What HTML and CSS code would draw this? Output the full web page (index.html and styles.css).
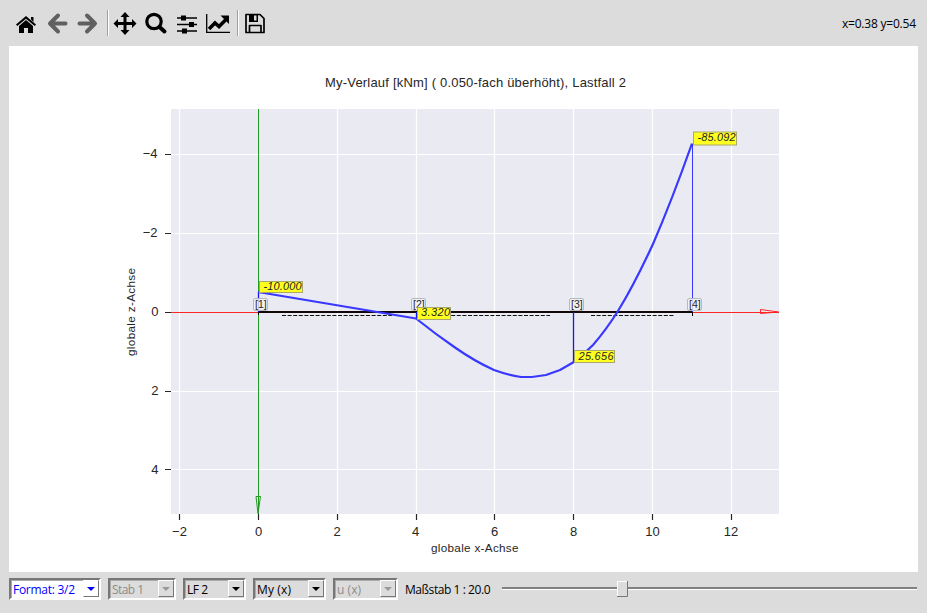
FILE: index.html
```html
<!DOCTYPE html>
<html lang="de">
<head>
<meta charset="utf-8">
<title>My-Verlauf</title>
<link rel="stylesheet" href="styles.css">
</head>
<body>
<header class="toolbar">
  <svg class="icons" width="270" height="46" viewBox="0 0 270 46">
    <path d="M16 24.500 26 16l10 8.500-1.300 1.500L26 18.700 17.300 26z"/><path d="M31 17h2.500v5l-2.500-2.500zM19 26l7-6 7 6v7h-5v-5h-4v5h-5z"/>
    <path class="arrow" d="M58 15.500 50 23.500l8 8M51 23.500h14.500M87 15.500l8 8-8 8M94 23.500H79.500"/>
    <path class="sep" d="M107.500 10v26M237.500 10v26"/><path class="sep-light" d="M108.500 10v26M238.500 10v26"/>
    <path d="m125 12 4.500 5H126.500v5h5.500V19l4.500 4.500L132 28v-3h-5.500V30h3l-4.500 5-4.500-5h3v-5h-5.500v3l-4.500-4.500L118 19v3h5.500V17h-3z"/>
    <circle class="lens" cx="154" cy="21.500" r="7.200"/><path class="handle" d="m159.500 27 5 4.500"/>
    <path class="rule" d="M177 18h20M177 24.500h20M177 31h20"/><path d="M181 15.500h5v5h-5zM189 22h5v5h-5zM182 28.500h5v5h-5z"/>
    <path class="axis" d="M206.700 14v18.300H230"/><path class="trend" d="m209 29 6-6 4 3.500 8-8"/><path d="M220.500 15.500h8.500v8.500z"/>
    <path class="disk" d="M246 14.500h14l4 4V32.500h-18zM249.500 32v-6.500h11.500V32"/><path d="M249 14h9v8h-9z"/><path class="shutter" d="M254 15.500h2.500v5h-2.500z"/>
  </svg>
  <svg class="coords" width="84" height="20"><text x="8" y="14" textLength="74">x=0.38 y=0.54</text></svg>
</header>
<main>
<svg class="plot" width="909" height="526" viewBox="9 46 909 526">
  <path class="area" d="M171 109h608v405H171z"/>
  <path class="grid" d="M179.500 109v405M258.500 109v405M337.500 109v405M416.500 109v405M494.500 109v405M573.500 109v405M652.500 109v405M731.500 109v405M171 154.500h608M171 233.500h608M171 312.500h608M171 391.500h608M171 469.500h608"/>
  <path class="tick" d="M179.500 514v6M258.500 514v6M337.500 514v6M416.500 514v6M494.500 514v6M573.500 514v6M652.500 514v6M731.500 514v6M165 154.500h6M165 233.500h6M165 312.500h6M165 391.500h6M165 469.500h6"/>
  <path class="red" d="M171 312.500h608M760.500 309.500v4l18-1.500z"/>
  <path class="green" d="M258.500 109v405M256 496.500h4.500l-2.500 17z"/>
  <path class="beam" d="M258 312h435"/><path class="beam-end" d="M258.500 310v5M416.500 310v5M573.500 310v5M692.500 310v6"/>
  <path class="fiber" d="M282 315.500h110M440 315.500h110M591 315.500h84"/>
  <path class="ordinate" d="M258.500 292v20M416.500 312v6M573.500 312v50"/><path class="ordinate thin" d="M692.500 144v168"/>
  <path class="curve" d="M258 292 416 318.500Q436 334.500 455 347.500Q475 361.500 494 370Q508 375 521 377L532 377L546 375L560 370L573 362.500Q583 355 593 345Q606 330 618 311Q634 285 653 244Q672 200 692 143.500"/>
  <g class="tag"><rect x="253.500" y="298.500" width="14" height="12" rx="1.500"/><rect x="411.500" y="298.500" width="14" height="12" rx="1.500"/><rect x="569.500" y="298.500" width="14" height="12" rx="1.500"/><rect x="687.500" y="298.500" width="14" height="12" rx="1.500"/></g>
  <g class="node"><text x="255" y="308">[1]</text><text x="413" y="308">[2]</text><text x="571" y="308">[3]</text><text x="689" y="308">[4]</text></g>
  <g class="value">
    <rect x="259.500" y="281.500" width="43" height="11"/><rect x="417.500" y="307.500" width="33" height="12"/><rect x="574.500" y="350.500" width="40" height="12"/><rect x="693.500" y="132" width="43" height="13"/>
    <text x="263.500" y="290" textLength="38">-10.000</text><text x="421" y="316" textLength="29">3.320</text><text x="578.500" y="360" textLength="35">25.656</text><text x="697.500" y="141" textLength="38">-85.092</text>
  </g>
  <text class="title" x="325" y="87" textLength="301">My-Verlauf [kNm] ( 0.050-fach überhöht), Lastfall 2</text>
  <g class="scale x"><text x="179.500" y="536">−2</text><text x="258.500" y="536">0</text><text x="337" y="536">2</text><text x="415.500" y="536">4</text><text x="494.500" y="536">6</text><text x="573.500" y="536">8</text><text x="652.500" y="536">10</text><text x="731" y="536">12</text></g>
  <g class="scale y"><text x="157.500" y="158">−4</text><text x="157.500" y="237">−2</text><text x="158.500" y="316">0</text><text x="158.500" y="395">2</text><text x="158.500" y="474">4</text></g>
  <text class="label" x="431" y="552" textLength="87.500">globale x-Achse</text>
  <text class="label" transform="translate(135 356) rotate(-90)" textLength="88">globale z-Achse</text>
</svg>
</main>
<footer class="controls">
  <div class="combo format"><svg class="caption"><text x="2" y="13" textLength="62">Format: 3/2</text></svg><span class="drop"></span></div>
  <div class="combo stab off"><svg class="caption"><text x="2" y="13" textLength="32">Stab 1</text></svg><span class="drop"></span></div>
  <div class="combo load"><svg class="caption"><text x="2" y="13" textLength="21">LF 2</text></svg><span class="drop"></span></div>
  <div class="combo moment"><svg class="caption"><text x="2" y="13" textLength="34">My (x)</text></svg><span class="drop"></span></div>
  <div class="combo shift off"><svg class="caption"><text x="2" y="13" textLength="24">u (x)</text></svg><span class="drop"></span></div>
  <svg class="slider" width="517" height="24" viewBox="401 578 517 24">
    <text x="405" y="594" textLength="85.500">Maßstab 1 : 20.0</text>
    <path class="groove" d="M502 588h415"/><path class="groove-light" d="M502 589.500h415"/>
    <path class="thumb" d="M617 581h11v16h-11z"/><path class="thumb-light" d="M617.500 596v-14.500h10"/><path class="thumb-dark" d="M617 596.500h10.500V581"/>
  </svg>
</footer>
</body>
</html>
```

FILE: styles.css
```css
* { box-sizing: border-box; }
body { margin: 0; width: 927px; height: 613px; overflow: hidden; background: #dcdcdc; font-family: "Liberation Sans", Arial, sans-serif; }
svg { display: block; }
.toolbar { height: 46px; display: flex; justify-content: space-between; padding-right: 9px; }
.coords { margin-top: 14px; }
.coords text, .caption text, .slider text { font: 12px "Open Sans", "Noto Sans", sans-serif; fill: #000; }
.arrow { fill: none; stroke: #606060; stroke-width: 4; stroke-linejoin: round; stroke-linecap: round; }
.sep { stroke: #a0a0a0; }
.sep-light { stroke: #fff; }
.lens { fill: none; stroke: #000; stroke-width: 3.2; }
.handle { stroke: #000; stroke-width: 4; stroke-linecap: round; }
.rule { stroke: #000; stroke-width: 1.5; }
.axis { fill: none; stroke: #000; stroke-width: 1.3; }
.trend { fill: none; stroke: #000; stroke-width: 3.5; }
.disk { fill: none; stroke: #000; stroke-width: 1.7; stroke-linejoin: round; }
.shutter { fill: #dcdcdc; }
main { padding-left: 9px; }
.plot { background: #fff; }
.plot text { fill: #262626; }
.area { fill: #eaeaf2; }
.grid { stroke: #fff; fill: none; stroke-width: 1.2; }
.tick { stroke: #262626; stroke-width: 1.2; }
.red { fill: none; stroke: #ff2525; }
.green { fill: none; stroke: #209a20; }
.beam { stroke: #160808; stroke-width: 2.2; }
.beam-end { stroke: #000; }
.fiber { stroke: #111; stroke-dasharray: 4 1.6; }
.tag rect { fill: #f2f2f2; fill-opacity: .8; stroke: #b8b8bc; }
.ordinate { stroke: #1515e8; stroke-width: 1.3; }
.thin { stroke: #3838ff; stroke-width: 1; }
.curve { fill: none; stroke: #3838ff; stroke-width: 2.2; stroke-linejoin: round; }
.node text { font-size: 10.5px; }
.value rect { fill: #ffff20; stroke: #a8a870; }
.value text { font-size: 11px; font-style: italic; }
.title { font-size: 13px; }
.scale text { font-size: 13px; text-anchor: middle; }
.scale.y text { text-anchor: end; }
.label { font-size: 11.7px; }
.controls { height: 41px; display: flex; padding: 6px 0 0 9px; }
.combo { display: flex; justify-content: space-between; height: 22px; border: 2px solid; border-color: #777 #fff #fff #777; box-shadow: inset 1px 1px #aaa; }
.format { width: 92px; margin-right: 7px; background: #fff; }
.stab { width: 68px; margin-right: 7px; }
.load { width: 63px; margin-right: 7px; }
.moment { width: 73px; margin-right: 7px; }
.shift { width: 65px; margin-right: 3px; }
.caption { flex: 1; min-width: 0; height: 18px; overflow: visible; }
.caption text { transform: translateY(1px); }
.format .caption text { fill: #0000ff; }
.off .caption text { fill: #8c8c8c; }
.drop { width: 16px; height: 17px; flex: none; background: #dcdcdc; border: 1px solid; border-color: #fff #777 #777 #fff; display: grid; place-items: center; }
.drop::after { content: ""; border: 4px solid transparent; border-top-color: #000; border-bottom: 0; }
.format .drop { background: #fff; }
.format .drop::after { border-top-color: #0000ff; }
.off .drop::after { border-top-color: #999; }
.groove { stroke: #808080; stroke-width: 2; }
.groove-light { stroke: #fff; stroke-width: 1; }
.thumb { fill: #dcdcdc; }
.thumb-light { fill: none; stroke: #fff; }
.thumb-dark { fill: none; stroke: #777; }
```
